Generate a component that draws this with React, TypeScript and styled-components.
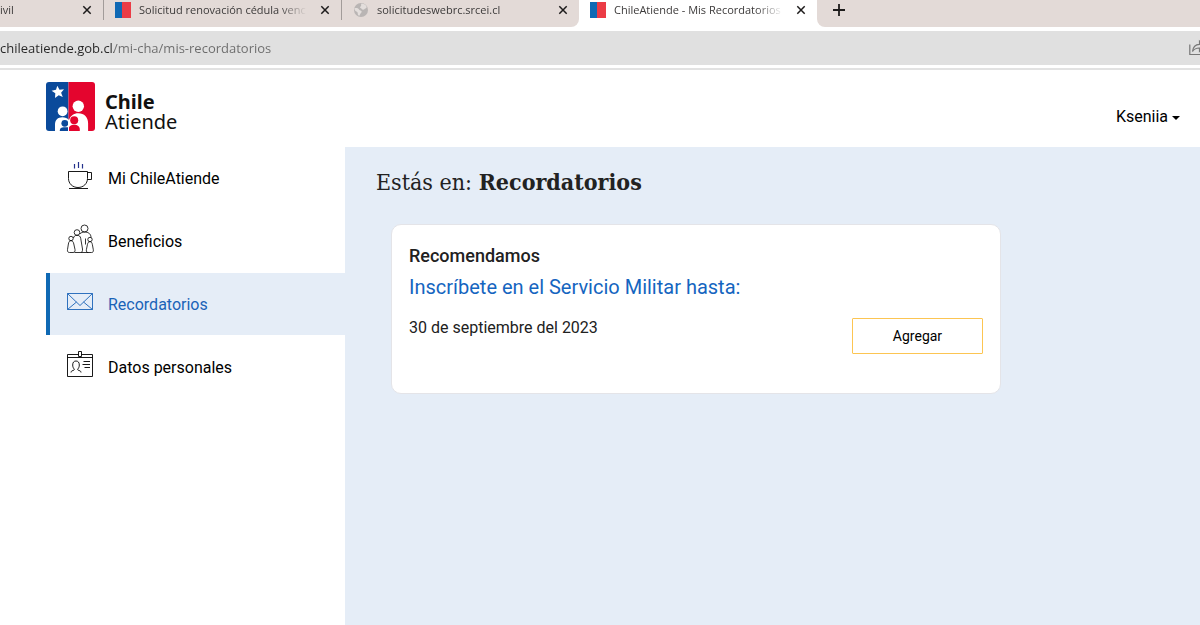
import React from "react";
import styled, { createGlobalStyle, css } from "styled-components";

const chromeFont = `"Segoe UI", "Open Sans", sans-serif`;
const siteFont = `Roboto, "Liberation Sans", sans-serif`;

const GlobalStyle = createGlobalStyle`
  *, *::before, *::after { box-sizing: border-box; }
  body { margin: 0; background: #fff; font-family: ${siteFont}; color: #000; overflow-x: hidden; }
  button, input { font: inherit; color: inherit; margin: 0; padding: 0; border: 0; background: none; }
  h1, h2, p { margin: 0; }
`;

const Page = styled.div`
  display: flex;
  flex-direction: column;
  min-height: 100vh;
`;

/* Browser chrome */

const TabStrip = styled.div`
  display: flex;
  height: 27px;
  font-family: ${chromeFont};
  font-size: 11px;
  color: #3c3a3a;
`;

const TabGroup = styled.div<{ $side: "left" | "right" }>`
  display: flex;
  background: #e3dad7;
  ${(p) =>
    p.$side === "left"
      ? css`
          border-bottom-right-radius: 8px;
        `
      : css`
          flex: 1;
          border-bottom-left-radius: 8px;
        `}
`;

const Tab = styled.div<{ $clipped?: boolean }>`
  display: flex;
  align-items: center;
  width: ${(p) => (p.$clipped ? 103 : 238)}px;
  height: 20px;
  padding: 0 10px 0 ${(p) => (p.$clipped ? 0 : 11)}px;
  gap: 8px;

  & + & {
    border-left: 1px solid #a29c9a;
  }
`;

const TabTitle = styled.span`
  flex: 1;
  min-width: 0;
  overflow: hidden;
  white-space: nowrap;
  line-height: 20px;
  mask-image: linear-gradient(to right, #000 calc(100% - 32px), transparent calc(100% - 4px));
`;

const ChromeButton = styled.button`
  display: flex;
  align-items: center;
  justify-content: center;
  width: 12px;
  height: 20px;
  color: #1d1b1b;
`;

const NewTab = styled(ChromeButton)`
  width: 44px;
`;

const AddressRow = styled.div`
  padding: 4px 0 3px;
  border-bottom: 2px solid #e2e2e2;
`;

const AddressBar = styled.div`
  display: flex;
  align-items: center;
  height: 34px;
  background: #e0e0e0;
`;

const Address = styled.input`
  flex: 1;
  min-width: 0;
  height: 34px;
  font-family: ${chromeFont};
  font-size: 13px;
  color: #6b6b6b;
  background: linear-gradient(to right, #262626 114px, #6b6b6b 114px);
  background-clip: text;
  -webkit-background-clip: text;
  -webkit-text-fill-color: transparent;
  outline: none;
`;

const ShareButton = styled(ChromeButton)`
  width: 11px;
  justify-content: flex-start;
  overflow: hidden;

  svg {
    flex: none;
  }
`;

/* Site */

const SiteHeader = styled.header`
  display: flex;
  justify-content: space-between;
  height: 77px;
  padding: 12px 20px 0 46px;
`;

const Brand = styled.a`
  display: flex;
  gap: 10px;
  color: #111;
  text-decoration: none;
`;

const BrandName = styled.span`
  display: flex;
  flex-direction: column;
  padding-top: 10px;
  font-family: "Noto Sans", sans-serif;
  font-size: 20px;
  line-height: 20px;
`;

const UserMenu = styled.button`
  display: flex;
  align-items: center;
  gap: 4px;
  height: 24px;
  margin-top: 22px;
  font-size: 16px;
`;

const Caret = styled.span`
  margin-top: 3px;
  border: 4px solid transparent;
  border-top-color: #000;
  border-bottom: 0;
`;

const Body = styled.div`
  display: flex;
  flex: 1;
`;

const Sidebar = styled.nav`
  display: flex;
  flex-direction: column;
  gap: 1px;
  flex: 0 0 345px;
  padding-left: 46px;
`;

const NavItem = styled.a<{ $active?: boolean }>`
  display: flex;
  align-items: center;
  gap: 14px;
  height: 62px;
  padding-left: 16px;
  border-left: 4px solid ${(p) => (p.$active ? "#0f69b4" : "transparent")};
  background: ${(p) => (p.$active ? "#e5edf7" : "transparent")};
  color: ${(p) => (p.$active ? "#1a63b7" : "#000")};
  font-size: 16px;
  text-decoration: none;

  svg {
    flex: none;
    margin-bottom: 4px;
  }
`;

const Main = styled.main`
  flex: 1;
  min-width: 0;
  padding: 19px 31px;
  background: #e5edf7;
`;

const Heading = styled.h1`
  font-family: "Roboto Slab", "DejaVu Serif Condensed", "DejaVu Serif", serif;
  font-size: 23px;
  line-height: 32px;
  font-weight: 400;
  color: #222;
`;

const Card = styled.section`
  max-width: 610px;
  margin: 26px 0 0 15px;
  padding: 19px 17px 39px;
  border: 1px solid #e4e4e8;
  border-radius: 10px;
  background: #fff;
  color: #212121;
`;

const CardTitle = styled.h2`
  font-size: 18px;
  line-height: 24px;
  font-weight: 500;
`;

const CardLink = styled.a`
  display: block;
  margin-top: 4px;
  font-size: 20px;
  line-height: 30px;
  color: #1565c0;
  text-decoration: none;
`;

const CardRow = styled.div`
  display: flex;
  justify-content: space-between;
  margin-top: 16px;
`;

const DateText = styled.p`
  font-size: 16px;
  line-height: 20px;
`;

const AddButton = styled.button`
  width: 131px;
  height: 36px;
  border: 1px solid #fcc552;
  border-radius: 1px;
  font-size: 14px;
  color: #000;
`;

const CloseIcon = () => (
  <svg width="10" height="10" viewBox="0 0 10 10" stroke="currentColor" strokeWidth="1.5">
    <path d="M1.3 1.3l7.4 7.4M8.7 1.3L1.3 8.7" />
  </svg>
);

const FlagIcon = () => (
  <svg width="16" height="16" viewBox="0 0 16 16">
    <path fill="#0f69b4" d="M0 0h7v16H0z" />
    <path fill="#eb3c46" d="M7 0h9v16H7z" />
  </svg>
);

const GlobeIcon = () => (
  <svg width="16" height="16" viewBox="0 0 16 16">
    <circle cx="8" cy="8" r="7" fill="#b9b5b4" />
    <path
      fill="#e3dedc"
      d="M1.500 6.200c2.300-.6 4 0 4.700 1.500.5 1 2.300.7 2.500 1.900.2 1.300-1.400 1.700-1.800 3.200-.2 1-1 1.200-1.600.5C4.400 12.400 5.200 10.900 4.200 10 3.400 9.200 1.500 9 1.500 6.200zM8.400 1.500c2 0 4 1 5 2.800.5 1.100.1 1.900-.9 2.100-1.100.2-1.200 1.200-2.300 1.300-1.300.1-1.500-1.300-2.500-1.700-1-.4-.7-1.400.1-1.800.9-.5-.2-1.600.6-2.700z"
    />
  </svg>
);

const ShareIcon = () => (
  <svg width="18" height="18" viewBox="0 0 18 18" fill="none" stroke="#777" strokeWidth="1.2">
    <path d="M.8 5.500v10h14.500v-4" />
    <path d="M3.500 12.500C4 8 6.500 5.500 10.500 5.300V2l6 5.300-6 5.200V9c-3.200-.1-5.400 1-7 3.500z" />
  </svg>
);

const BrandMark = () => (
  <svg width="49" height="49" viewBox="0 0 49 49">
    <defs>
      <clipPath id="mark">
        <rect width="49" height="49" rx="3" />
      </clipPath>
    </defs>
    <g clipPath="url(#mark)">
      <path fill="#0a4a9b" d="M0 0h22.500v49H0z" />
      <path fill="#e4052e" d="M22.500 0H49v49H22.500z" />
      <path
        fill="#fff"
        d="M11.300 3.800l2.200 3.900 4.500-.4-2.900 3.400 1.700 4.200-4.100-1.700-3.700 2.700.3-4.600-3.700-2.600 4.400-1z"
      />
      <circle cx="32.300" cy="24.300" r="5.700" fill="#fff" />
      <circle cx="16.600" cy="29.300" r="4.900" fill="#fff" />
      <path
        fill="#fff"
        d="M9 49V42.500c0-4.500 2.800-7.300 7.300-7.300 3 0 5 .9 6.700 2.900 1.600-4.500 4.800-6.800 9.300-6.800 6 0 9.800 4 9.800 10V49z"
      />
      <circle cx="18.800" cy="41.300" r="3.400" fill="#0a4a9b" />
      <circle cx="28.200" cy="38.200" r="4" fill="#e4052e" />
      <path fill="#0a4a9b" d="M13.800 49v-.8c0-1.800 1.700-3 4-3h4.700V49z" />
      <path fill="#e4052e" d="M22.500 49v-1.500c0-3 2.300-4.700 5.700-4.700s5.600 1.700 5.600 4.700V49z" />
      <path stroke="#fff" strokeWidth="1" d="M22.500 40v9" />
    </g>
  </svg>
);

const lineIcon = {
  width: 28,
  height: 30,
  viewBox: "0 0 28 30",
  fill: "none",
  stroke: "currentColor",
  strokeWidth: 0.9,
};

const CupIcon = () => (
  <svg {...lineIcon}>
    <path stroke="#24318c" strokeWidth="1.2" d="M8.500 3v4.500M12.500 1v6M16.500 3v4.500" />
    <path d="M2.500 10.500h19v7c0 5-4 9-9.500 9s-9.500-4-9.500-9zM21.500 11.500h4v7h-4M3 27.500h19" />
  </svg>
);

const FamilyIcon = () => (
  <svg {...lineIcon} strokeWidth="0.8">
    <circle cx="18.500" cy="4.500" r="3.500" />
    <circle cx="11" cy="8.500" r="2.800" />
    <circle cx="5" cy="14.500" r="2.200" />
    <circle cx="24" cy="15.500" r="2.200" />
    <path d="M14 10c1-1.300 2.500-2 4.500-2 4 0 6.500 2 6.500 5.500" />
    <path d="M7.500 14c.3-1.700 1.500-2.700 3.500-2.700s3.500 1 3.700 3L16.500 25c.2 2-.5 3.500-2 3.500h-6" />
    <path d="M5 16.700c-1.700 0-2.300 1.300-2.600 3.300L1.500 25.500c-.3 2 .5 3 2 3h3.500c1.500 0 2.300-1 2-3L7.800 20c-.4-2-1.100-3.300-2.800-3.300z" />
    <path d="M24 17.700c-1.600 0-2.200 1-2.600 3l-1 5c-.3 1.800.4 2.800 1.700 2.800h3.500c1.400 0 2-1 1.700-2.800l-.9-5c-.4-2-.9-3-2.400-3z" />
    <path d="M14.500 28.500h8M19.500 14.500v6" />
  </svg>
);

const MailIcon = () => (
  <svg {...lineIcon}>
    <path d="M1.500 6.500h25v16h-25zM1.500 6.500L14 18.500l12.500-12M1.500 22.500l9-7.500M26.500 22.500l-9-7.500" />
  </svg>
);

const IdIcon = () => (
  <svg {...lineIcon}>
    <path d="M1.500 4.500h25v22h-25zM1.500 7.500h25" />
    <path fill="#fff" d="M12.500 1.500h3v5h-3z" />
    <path d="M5 22.500c0-1 .5-1.600 2-2 1.200-.3 1.500-.7 1.200-1.500-1-1-1.500-2.300-1.500-4 0-2.600 1.200-4 3.300-4s3.300 1.400 3.300 4c0 1.700-.5 3-1.500 4-.3.800 0 1.200 1.200 1.500 1.500.4 2 1 2 2" />
    <path d="M17.500 11.500H24M16.500 14.500h7.500M18.500 17.500H24" />
  </svg>
);

const navItems = [
  { label: "Mi ChileAtiende", Icon: CupIcon },
  { label: "Beneficios", Icon: FamilyIcon },
  { label: "Recordatorios", Icon: MailIcon, active: true },
  { label: "Datos personales", Icon: IdIcon },
];

interface BrowserTabProps {
  title: string;
  icon?: React.ReactNode;
  clipped?: boolean;
}

const BrowserTab = ({ title, icon, clipped }: BrowserTabProps) => (
  <Tab $clipped={clipped}>
    {icon}
    <TabTitle>{title}</TabTitle>
    <ChromeButton aria-label="Cerrar pestaña">
      <CloseIcon />
    </ChromeButton>
  </Tab>
);

export default function App() {
  return (
    <Page>
      <GlobalStyle />
      <TabStrip>
        <TabGroup $side="left">
          <BrowserTab title="ivil" clipped />
          <BrowserTab title="Solicitud renovación cédula venc" icon={<FlagIcon />} />
          <BrowserTab title="solicitudeswebrc.srcei.cl" icon={<GlobeIcon />} />
        </TabGroup>
        <BrowserTab title="ChileAtiende - Mis Recordatorios" icon={<FlagIcon />} />
        <TabGroup $side="right">
          <NewTab aria-label="Nueva pestaña">
            <svg width="12" height="12" viewBox="0 0 12 12" stroke="currentColor" strokeWidth="1.8">
              <path d="M6 0v12M0 6h12" />
            </svg>
          </NewTab>
        </TabGroup>
      </TabStrip>
      <AddressRow>
        <AddressBar>
          <Address aria-label="Dirección" defaultValue="chileatiende.gob.cl/mi-cha/mis-recordatorios" />
          <ShareButton aria-label="Compartir">
            <ShareIcon />
          </ShareButton>
        </AddressBar>
      </AddressRow>

      <SiteHeader>
        <Brand href="#">
          <BrandMark />
          <BrandName>
            <b>Chile</b>
            <span>Atiende</span>
          </BrandName>
        </Brand>
        <UserMenu>
          Kseniia
          <Caret />
        </UserMenu>
      </SiteHeader>

      <Body>
        <Sidebar>
          {navItems.map(({ label, Icon, active }) => (
            <NavItem key={label} href="#" $active={active}>
              <Icon />
              {label}
            </NavItem>
          ))}
        </Sidebar>
        <Main>
          <Heading>
            Estás en: <b>Recordatorios</b>
          </Heading>
          <Card>
            <CardTitle>Recomendamos</CardTitle>
            <CardLink href="#">Inscríbete en el Servicio Militar hasta:</CardLink>
            <CardRow>
              <DateText>30 de septiembre del 2023</DateText>
              <AddButton>Agregar</AddButton>
            </CardRow>
          </Card>
        </Main>
      </Body>
    </Page>
  );
}
